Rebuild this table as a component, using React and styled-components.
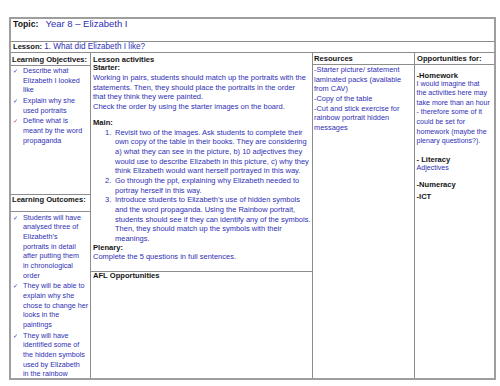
import React from 'react';
import styled, { createGlobalStyle } from 'styled-components';

const BLUE = '#2f2fb4';
const INK = '#141414';
const LINE = '#8c8c8c';

const Global = createGlobalStyle`
  html, body { margin: 0; padding: 0; background: #fff; }
  body {
    width: 500px; height: 386px; overflow: hidden;
    font-family: "Liberation Sans", Arial, sans-serif;
  }
`;

const Table = styled.div`
  box-sizing: border-box;
  margin: 17px 0 0 9px;
  width: 487px;
  height: 363px;
  border: 2px solid #9e9e9e;
  display: flex;
  flex-direction: column;
`;

const TopicRow = styled.div`
  box-sizing: border-box;
  height: 23px;
  flex: none;
  border-bottom: 1px solid ${LINE};
  padding-left: 2px;
  display: flex;
  align-items: baseline;
  line-height: 10px;
  white-space: nowrap;
`;

const LessonRow = styled(TopicRow)`
  height: 11px;
`;

const Label = styled.span`
  font-weight: 700;
  color: ${INK};
  font-size: ${(p) => p.$size}px;
`;

const Value = styled.span`
  color: ${BLUE};
  font-size: ${(p) => p.$size}px;
  margin-left: ${(p) => p.$gap || 0}px;
`;

const Body = styled.div`
  flex: 1;
  min-height: 0;
  display: flex;
`;

const Column = styled.div`
  box-sizing: border-box;
  width: ${(p) => p.$w}px;
  flex: none;
  display: flex;
  flex-direction: column;
  border-right: ${(p) => (p.$last ? 'none' : `1px solid ${LINE}`)};
  --text-size: ${(p) => p.$text || 7.5}px;
`;

const Cell = styled.div`
  box-sizing: border-box;
  height: ${(p) => (p.$h ? `${p.$h}px` : 'auto')};
  flex: ${(p) => (p.$h ? 'none' : '1')};
  min-height: 0;
  overflow: hidden;
  border-bottom: ${(p) => (p.$ruled ? `1px solid ${LINE}` : 'none')};
  padding: ${(p) => p.$pad || '0'};
`;

const Heading = styled.div`
  font-weight: 700;
  font-size: 7.6px;
  line-height: ${(p) => p.$lh || 8}px;
  color: ${INK};
  white-space: nowrap;
  margin-top: ${(p) => p.$mt || 0}px;
`;

const Text = styled.div`
  color: ${BLUE};
  font-size: var(--text-size);
  line-height: 9.65px;
  white-space: nowrap;
  margin-top: ${(p) => p.$mt || 0}px;
`;

const TickList = styled.ul`
  list-style: none;
  margin: 0;
  padding: 0;
  display: flex;
  flex-direction: column;
  gap: 1px;
`;

const TickItem = styled.li`
  display: flex;
  align-items: flex-start;
`;

const Tick = styled.span`
  flex: none;
  width: 10px;
  margin-left: 2px;
  color: ${(p) => p.$color || BLUE};
  font-family: "DejaVu Sans", sans-serif;
  font-size: 6px;
  line-height: 9.65px;
`;

const NumList = styled.ol`
  list-style: none;
  margin: 1px 0 0 0;
  padding: 0;
`;

const NumItem = styled.li`
  display: flex;
  align-items: flex-start;
`;

const Num = styled.span`
  flex: none;
  width: 10px;
  margin-left: 12px;
  color: ${BLUE};
  font-size: var(--text-size);
  line-height: 9.65px;
`;

const objectives = [
  { lines: ['Describe what', 'Elizabeth I looked', 'like'] },
  { lines: ['Explain why she', 'used portraits'] },
  { lines: ['Define what is', 'meant by the word', 'propaganda'], color: '#9c3c9c' },
];

const outcomes = [
  {
    lines: [
      'Students will have',
      'analysed three of',
      'Elizabeth\u2019s',
      'portraits in detail',
      'after putting them',
      'in chronological',
      'order',
    ],
  },
  { lines: ['They will be able to', 'explain why she', 'chose to change her', 'looks in the', 'paintings'] },
  {
    lines: ['They will have', 'identified some of', 'the hidden symbols', 'used by Elizabeth', 'in the rainbow'],
  },
];

const mainSteps = [
  [
    'Revisit two of the images. Ask students to complete their',
    'own copy of the table in their books. They are considering',
    'a) what they can see in the picture, b) 10 adjectives they',
    'would use to describe Elizabeth in this picture, c) why they',
    'think Elizabeth would want herself portrayed in this way.',
  ],
  ['Go through the ppt, explaining why Elizabeth needed to', 'portray herself in this way.'],
  [
    'Introduce students to Elizabeth\u2019s use of hidden symbols',
    'and the word propaganda. Using the Rainbow portrait,',
    'students should see if they can identify any of the symbols.',
    'Then, they should match up the symbols with their',
    'meanings.',
  ],
];

const Lines = ({ lines, mt }) => (
  <Text $mt={mt}>
    {lines.map((l, i) => (
      <React.Fragment key={i}>
        {i > 0 && <br />}
        {l}
      </React.Fragment>
    ))}
  </Text>
);

const Ticks = ({ items }) => (
  <TickList>
    {items.map((it, i) => (
      <TickItem key={i}>
        <Tick $color={it.color}>✓</Tick>
        <Lines lines={it.lines} />
      </TickItem>
    ))}
  </TickList>
);

export default function App() {
  return (
    <>
      <Global />
      <Table>
        <TopicRow>
          <Label $size={8.7}>Topic:</Label>
          <Value $size={9.5} $gap={7}>
            Year 8 – Elizabeth I
          </Value>
        </TopicRow>
        <LessonRow>
          <Label $size={7.6}>Lesson:</Label>
          <Value $size={8.2} $gap={2}>
            1. What did Elizabeth I like?
          </Value>
        </LessonRow>
        <Body>
          <Column $w={80} $text={7.2}>
            <Cell $h={13} $ruled $pad="2.5px 0 0 1px">
              <Heading>Learning Objectives:</Heading>
            </Cell>
            <Cell $h={129} $ruled>
              <Ticks items={objectives} />
            </Cell>
            <Cell $h={17} $ruled $pad="0.5px 0 0 1px">
              <Heading>Learning Outcomes:</Heading>
            </Cell>
            <Cell $pad="0.7px 0 0 0">
              <Ticks items={outcomes} />
            </Cell>
          </Column>

          <Column $w={222}>
            <Cell $h={219} $ruled $pad="2.5px 0 0 2px">
              <Heading>Lesson activities</Heading>
              <Heading $mt={0.5}>Starter:</Heading>
              <Lines
                mt={1}
                lines={[
                  'Working in pairs, students should match up the portraits with the',
                  'statements. Then, they should place the portraits in the order',
                  'that they think they were painted.',
                  'Check the order by using the starter images on the board.',
                ]}
              />
              <Heading $mt={7}>Main:</Heading>
              <NumList>
                {mainSteps.map((lines, i) => (
                  <NumItem key={i}>
                    <Num>{i + 1}.</Num>
                    <Lines lines={lines} />
                  </NumItem>
                ))}
              </NumList>
              <Heading>Plenary:</Heading>
              <Lines lines={['Complete the 5 questions in full sentences.']} />
            </Cell>
            <Cell $pad="0 0 0 2px">
              <Heading $lh={7}>AFL Opportunities</Heading>
            </Cell>
          </Column>

          <Column $w={102} $text={7.4}>
            <Cell $h={12} $ruled $pad="2px 0 0 1px">
              <Heading>Resources</Heading>
            </Cell>
            <Cell $pad="0 0 0 1px">
              <Lines
                lines={[
                  '-Starter picture/ statement',
                  'laminated packs (available',
                  'from CAV)',
                  '-Copy of the table',
                  '-Cut and stick exercise for',
                  'rainbow portrait hidden',
                  'messages',
                ]}
              />
            </Cell>
          </Column>

          <Column $w={79} $last $text={7.1}>
            <Cell $h={12} $ruled $pad="2px 0 0 2px">
              <Heading>Opportunities for:</Heading>
            </Cell>
            <Cell $pad="6.5px 0 0 1.5px">
              <Heading>-Homework</Heading>
              <Lines
                lines={[
                  'I would imagine that',
                  'the activities here may',
                  'take more than an hour',
                  '- therefore some of it',
                  'could be set for',
                  'homework (maybe the',
                  'plenary questions?).',
                ]}
              />
              <Heading $mt={9}>- Literacy</Heading>
              <Lines lines={['Adjectives']} />
              <Heading $mt={7.6}>-Numeracy</Heading>
              <Heading $mt={4}>-ICT</Heading>
            </Cell>
          </Column>
        </Body>
      </Table>
    </>
  );
}
